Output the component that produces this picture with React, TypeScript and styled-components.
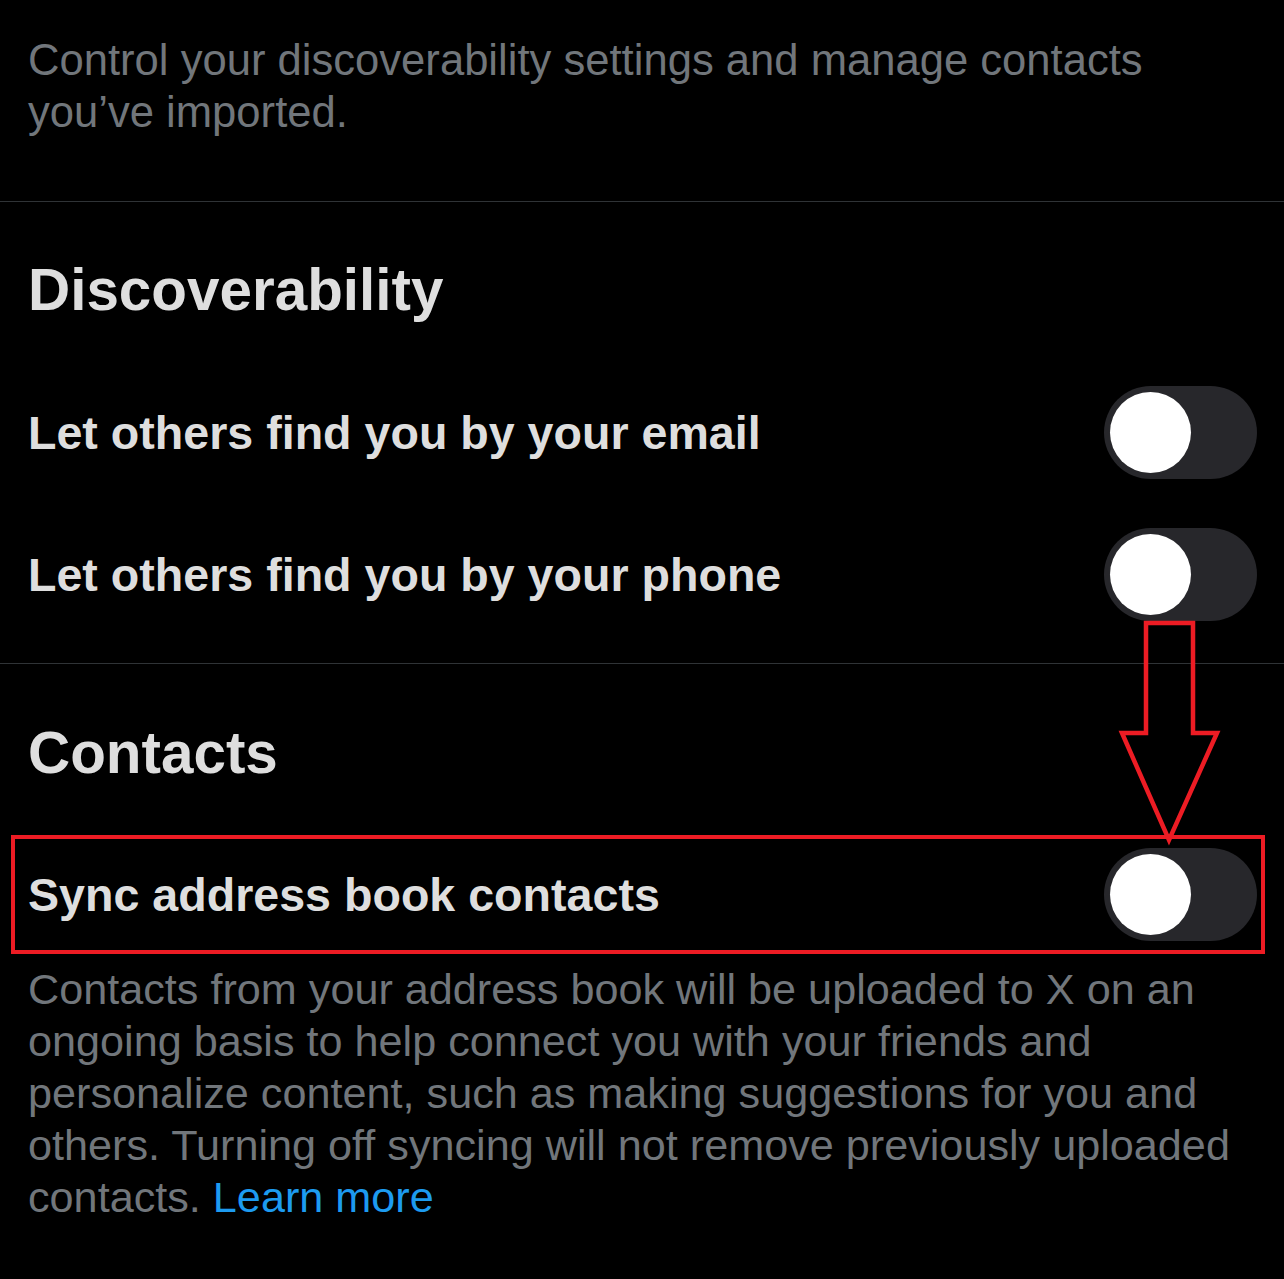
import React from "react";
import styled, { createGlobalStyle } from "styled-components";

const GlobalStyle = createGlobalStyle`
  html, body {
    margin: 0;
    padding: 0;
    background: #000;
  }
`;

const Page = styled.div`
  position: relative;
  min-height: 1279px;
  background: #000;
  font-family: "Liberation Sans", Arial, sans-serif;
  color: #e0e0e0;
  overflow: hidden;
`;

const Section = styled.section`
  padding: 0 28px;
`;

const Paragraph = styled.p`
  margin: 0;
  font-size: 43.6px;
  line-height: 52px;
  color: #71767b;
`;

const Intro = styled(Paragraph)`
  padding: 34px 28px 0;
  margin-bottom: 63px;
`;

const Divider = styled.hr<{ $top?: number }>`
  margin: ${({ $top = 0 }) => $top}px 0 0;
  border: none;
  height: 1px;
  background: #2f3336;
`;

const Heading = styled.h2<{ $top: number }>`
  margin: ${({ $top }) => $top}px 0 0;
  font-size: 58.4px;
  font-weight: 700;
  line-height: 70px;
  color: #dedede;
`;

const Row = styled.div<{ $top: number }>`
  position: relative;
  display: flex;
  align-items: center;
  justify-content: space-between;
  margin-top: ${({ $top }) => $top}px;
`;

const Label = styled.span`
  font-size: 46.6px;
  font-weight: 700;
  color: #dedede;
`;

const Track = styled.div`
  display: flex;
  align-items: center;
  width: 153px;
  height: 93px;
  padding: 0 6px;
  box-sizing: border-box;
  border-radius: 47px;
  background: #27272b;
  margin-right: -1px;
`;

const Knob = styled.div`
  width: 81px;
  height: 81px;
  border-radius: 50%;
  background: #fff;
`;

const Highlight = styled.div`
  position: absolute;
  top: -13px;
  bottom: -13px;
  left: -17px;
  right: -9px;
  border: 4.5px solid #ed1c24;
  pointer-events: none;
`;

const Description = styled(Paragraph)`
  margin-top: 22px;
  font-size: 43.2px;
`;

const LearnMore = styled.a`
  color: #1d9bf0;
  text-decoration: none;
`;

const Arrow = styled.svg`
  position: absolute;
  left: 0;
  top: 0;
  pointer-events: none;
`;

const Toggle: React.FC = () => (
  <Track>
    <Knob />
  </Track>
);

export default function App() {
  return (
    <Page>
      <GlobalStyle />
      <Intro>
        Control your discoverability settings and manage contacts
        <br />
        you’ve imported.
      </Intro>
      <Divider />
      <Section>
        <Heading $top={53}>Discoverability</Heading>
        <Row $top={61}>
          <Label>Let others find you by your email</Label>
          <Toggle />
        </Row>
        <Row $top={49}>
          <Label>Let others find you by your phone</Label>
          <Toggle />
        </Row>
      </Section>
      <Divider $top={42} />
      <Section>
        <Heading $top={54}>Contacts</Heading>
        <Row $top={60}>
          <Label>Sync address book contacts</Label>
          <Toggle />
          <Highlight />
        </Row>
        <Description>
          Contacts from your address book will be uploaded to X on an
          <br />
          ongoing basis to help connect you with your friends and
          <br />
          personalize content, such as making suggestions for you and
          <br />
          others. Turning off syncing will not remove previously uploaded
          <br />
          contacts. <LearnMore href="#">Learn more</LearnMore>
        </Description>
      </Section>
      <Arrow width="1284" height="1279" viewBox="0 0 1284 1279">
        <polygon
          points="1146,623 1193,623 1193,733 1217,733 1169,840 1122,733 1146,733"
          fill="none"
          stroke="#ed1c24"
          strokeWidth="4.5"
          strokeLinejoin="miter"
        />
      </Arrow>
    </Page>
  );
}
